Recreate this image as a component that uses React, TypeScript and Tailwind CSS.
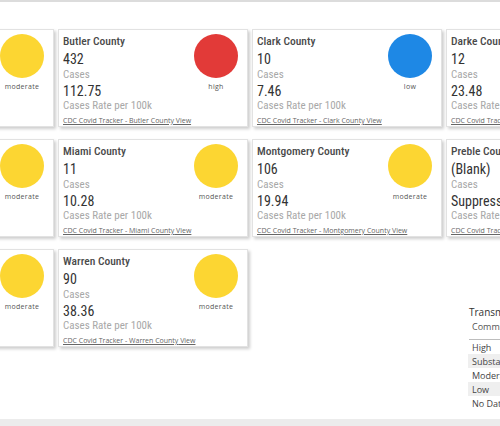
import React from "react";

type Level = "high" | "moderate" | "low";

type County = {
  name: string;
  cases: string;
  rate: string;
  level: Level;
};

const dot: Record<Level, string> = {
  high: "bg-[#e23a38]",
  moderate: "bg-[#fcd632]",
  low: "bg-[#1e88e5]",
};

const rows: County[][] = [
  [
    { name: "Allen County", cases: "18", rate: "39.12", level: "moderate" },
    { name: "Butler County", cases: "432", rate: "112.75", level: "high" },
    { name: "Clark County", cases: "10", rate: "7.46", level: "low" },
    { name: "Darke County", cases: "12", rate: "23.48", level: "moderate" },
    { name: "Greene County", cases: "64", rate: "38.02", level: "moderate" },
  ],
  [
    { name: "Logan County", cases: "9", rate: "19.85", level: "moderate" },
    { name: "Miami County", cases: "11", rate: "10.28", level: "moderate" },
    { name: "Montgomery County", cases: "106", rate: "19.94", level: "moderate" },
    { name: "Preble County", cases: "(Blank)", rate: "Suppressed", level: "moderate" },
    { name: "Shelby County", cases: "7", rate: "14.52", level: "moderate" },
  ],
  [
    { name: "Union County", cases: "15", rate: "23.60", level: "moderate" },
    { name: "Warren County", cases: "90", rate: "38.36", level: "moderate" },
  ],
];

const legend = ["High", "Substantial", "Moderate", "Low", "No Data"];

function CountyCard({ county }: { county: County }) {
  return (
    <div className="flex h-[98px] w-[190px] flex-col overflow-hidden border border-[#e2e2e2] bg-white shadow-[2px_2px_3px_rgba(0,0,0,0.2)]">
      <div className="flex flex-1">
        <div className="min-w-0 flex-1 pl-[4px] pt-[5px] [font-family:Roboto,sans-serif]">
          <div className="whitespace-nowrap text-[11.5px] font-medium leading-[13px] text-[#4a4a4a] font-stretch-[80%]">
            {county.name}
          </div>
          <div className="mt-[3px] whitespace-nowrap text-[14px] leading-[16px] text-[#333] font-stretch-[75%]">
            {county.cases}
          </div>
          <div className="mt-[1px] text-[11px] leading-[13px] text-[#a8a8a8] font-stretch-[80%]">
            Cases
          </div>
          <div className="mt-[2px] whitespace-nowrap text-[14px] leading-[16px] text-[#333] font-stretch-[75%]">
            {county.rate}
          </div>
          <div className="whitespace-nowrap text-[11px] leading-[13px] text-[#a8a8a8] font-stretch-[80%]">
            Cases Rate per 100k
          </div>
        </div>
        <div className="mr-[9px] flex w-[44px] flex-col items-center pt-[4px] [font-family:'Open_Sans',sans-serif]">
          <div className={`h-[44px] w-[44px] shrink-0 rounded-full ${dot[county.level]}`} />
          <div className="mt-[5px] text-[7px] leading-[8px] tracking-[0.3px] text-[#555]">
            {county.level}
          </div>
        </div>
      </div>
      <div className="whitespace-nowrap pb-[1px] pl-[4px] text-[7px] leading-[8px] text-[#666] underline [font-family:'Open_Sans',sans-serif] font-stretch-[88%]">
        CDC Covid Tracker - {county.name} View
      </div>
    </div>
  );
}

function Legend() {
  return (
    <div className="ml-[22px] mt-[56px] w-[120px] [font-family:'Open_Sans',sans-serif]">
      <div className="whitespace-nowrap pl-[1px] text-[10px] leading-[14px] text-[#333]">
        Transmission Level
      </div>
      <div className="ml-[1px] whitespace-nowrap border-b border-[#bdbdbd] pb-[5px] pl-[3px] pt-[1px] text-[9px] leading-[14px] text-[#555]">
        Community Transmission
      </div>
      {legend.map((item, i) => (
        <div
          key={item}
          className={`h-[14px] whitespace-nowrap pl-[4px] pt-[2px] text-[9px] leading-[11px] text-[#444] ${
            i % 2 === 1 ? "bg-[#efefef]" : ""
          }`}
        >
          {item}
        </div>
      ))}
    </div>
  );
}

export default function App() {
  return (
    <div className="flex h-[426px] w-[500px] flex-col overflow-hidden bg-white">
      <div className="h-[2px] shrink-0 bg-[#dcdcdc]" />
      <div className="ml-[-136px] mt-[27px] grid shrink-0 grid-cols-[repeat(5,190px)] items-start gap-x-[4px] gap-y-[12px]">
        {rows[0].map((c) => (
          <CountyCard key={c.name} county={c} />
        ))}
        {rows[1].map((c) => (
          <CountyCard key={c.name} county={c} />
        ))}
        {rows[2].map((c) => (
          <CountyCard key={c.name} county={c} />
        ))}
        <div />
        <Legend />
      </div>
      <div className="mt-auto h-[7px] shrink-0 bg-[#ececec]" />
    </div>
  );
}
